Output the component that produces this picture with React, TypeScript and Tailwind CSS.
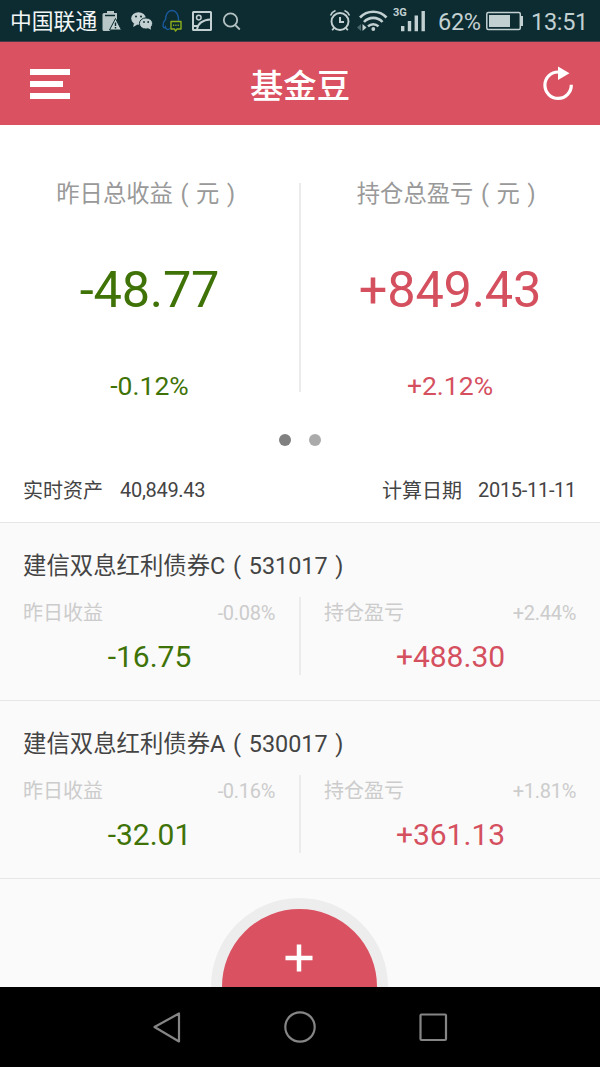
type Tone = "up" | "down";

type Figure = {
  label: string;
  amount: string;
  percent: string;
  tone: Tone;
};

type Fund = {
  name: string;
  code: string;
  figures: Figure[];
};

const toneClass: Record<Tone, string> = {
  up: "text-[#d5505f]",
  down: "text-[#3f7307]",
};

const totals: Figure[] = [
  { label: "昨日总收益", amount: "-48.77", percent: "-0.12%", tone: "down" },
  { label: "持仓总盈亏", amount: "+849.43", percent: "+2.12%", tone: "up" },
];

const funds: Fund[] = [
  {
    name: "建信双息红利债券C",
    code: "531017",
    figures: [
      { label: "昨日收益", amount: "-16.75", percent: "-0.08%", tone: "down" },
      { label: "持仓盈亏", amount: "+488.30", percent: "+2.44%", tone: "up" },
    ],
  },
  {
    name: "建信双息红利债券A",
    code: "530017",
    figures: [
      { label: "昨日收益", amount: "-32.01", percent: "-0.16%", tone: "down" },
      { label: "持仓盈亏", amount: "+361.13", percent: "+1.81%", tone: "up" },
    ],
  },
];

// Brackets take a full character cell each, with the glyph in the middle
function Bracketed({ children }: { children: string }) {
  return (
    <>
      <span className="inline-block w-[1em] text-center">(</span>
      {children}
      <span className="inline-block w-[1em] text-center">)</span>
    </>
  );
}

function StatusBar() {
  return (
    <div className="flex h-[42px] shrink-0 items-center justify-between border-b border-[#4a3a48] bg-[#0c2c31] pl-2.5 pr-3 text-[#c3d0d1]">
      <div className="flex items-center">
        <span className="w-[92px] whitespace-nowrap pt-1 text-[21.8px] text-[#f2f6f6]">中国联通</span>
        <svg className="h-[42px] w-[140px]" viewBox="102 0 140 42" fill="none">
          {/* battery with warning */}
          <path
            d="M107 11h7v2h3v8l-7 10h-6a1.500 1.500 0 0 1-1.500-1.500V14.500A1.500 1.500 0 0 1 104 13h3z"
            fill="#b9c6c7"
          />
          <path d="M105 15.500h10" stroke="#0c2c31" strokeWidth="1.500" />
          <path d="M115.500 18.500l6 11.500h-12z" fill="#c3d0d1" stroke="#0c2c31" strokeWidth="1" />
          <path d="M115.500 22.500v3.500M115.500 27v1.500" stroke="#0c2c31" strokeWidth="1.500" />
          {/* chat bubbles */}
          <ellipse cx="138.500" cy="18.500" rx="7.300" ry="6.200" fill="#c3d0d1" />
          <path d="M134 23l-.8 4 4.300-2.500z" fill="#c3d0d1" />
          <ellipse cx="146" cy="23.500" rx="6.600" ry="5.600" fill="#c3d0d1" stroke="#0c2c31" strokeWidth="1" />
          <path d="M148 28l3 1.800-.5-3.600z" fill="#c3d0d1" />
          <g fill="#0c2c31">
            <circle cx="136" cy="16.500" r="1" />
            <circle cx="141" cy="16.500" r="1" />
            <circle cx="144" cy="22" r=".9" />
            <circle cx="148.200" cy="22" r=".9" />
          </g>
          {/* penguin */}
          <path
            d="M170 28.500c-2 1.500-4 1.500-4.500-1.500-1 1.500-2.500.5-2.500-1.500s1-4.500 2.500-6c0-5 2.500-9 6.500-9s6.500 4 6.500 9v1.500"
            stroke="#1b5a9e"
            strokeWidth="1.400"
          />
          <path
            d="M171 21.500h10v7.500h-4l-1.500 2-1-2h-3.500z"
            stroke="#8fae1b"
            strokeWidth="1.400"
            strokeLinejoin="round"
          />
          <path d="M173 25.300h6" stroke="#8fae1b" strokeWidth="1.400" strokeDasharray="1.200 1.100" />
          {/* picture */}
          <rect x="193" y="12" width="18" height="18" rx=".5" stroke="#c3d0d1" strokeWidth="2" />
          <circle cx="198.800" cy="17.600" r="2.300" stroke="#c3d0d1" strokeWidth="1.500" />
          <path d="M194 26h3.500M197 29.500c.8-5.500 5.500-9.500 13.500-10" stroke="#c3d0d1" strokeWidth="1.800" />
          {/* search */}
          <circle cx="230.500" cy="20" r="6.700" stroke="#b3c1c3" strokeWidth="1.800" />
          <path d="M235.200 25l4.600 4.500" stroke="#b3c1c3" strokeWidth="1.800" />
        </svg>
      </div>
      <div className="flex items-center font-[Roboto] text-[23.500px]">
        <svg className="h-[42px] w-[101px]" viewBox="328 0 101 42" fill="none" stroke="#c3d0d1">
          {/* alarm */}
          <circle cx="340" cy="21.500" r="8.500" strokeWidth="1.900" />
          <path d="M340 17v5h4" strokeWidth="2" />
          <path d="M330.500 15.500c1-2.500 2.500-4 5-5M349.500 15.500c-1-2.500-2.500-4-5-5" strokeWidth="1.600" />
          <path d="M334 28l-1.800 2.200M346 28l1.800 2.200" strokeWidth="1.800" />
          {/* wifi */}
          <path d="M360 17.500a18 18 0 0 1 26.500 0" strokeWidth="2.600" />
          <path d="M364 22a12.500 12.500 0 0 1 18.500 0" strokeWidth="2.600" />
          <path d="M368 26.300a7.500 7.500 0 0 1 10.500 0" strokeWidth="2.500" />
          <circle cx="373.300" cy="29" r="1.900" fill="#c3d0d1" stroke="none" />
          <path d="M361 24v7l-4-3.500z" fill="#49666a" stroke="none" />
          <path d="M362.500 24v7l4-3.500z" fill="#c3d0d1" stroke="none" />
          {/* signal */}
          <text x="393" y="16" fill="#c3d0d1" stroke="none" className="text-[11px] font-bold">
            3G
          </text>
          <path d="M402.700 26v5.300M409.500 21v10.300M416.300 15.500v15.800M423.200 11v20.300" strokeWidth="3.400" />
        </svg>
        <span className="ml-[9px] w-12 whitespace-nowrap pt-1 tracking-[-0.3px]">62%</span>
        <svg className="h-[42px] w-[39px]" viewBox="486 0 39 42" fill="none">
          <rect x="486.800" y="12.500" width="33.500" height="17" rx="1.500" stroke="#c3d0d1" strokeWidth="1.500" />
          <path d="M489 15h21v12h-21z" fill="#c3d0d1" />
          <path d="M521 16h2v10h-2z" fill="#c3d0d1" />
        </svg>
        <span className="w-[63px] whitespace-nowrap pt-1 text-right tracking-[-0.3px]">13:51</span>
      </div>
    </div>
  );
}

function Header() {
  return (
    <header className="flex h-[83px] shrink-0 items-center justify-between bg-[#da5161] pl-[30px] pr-[26px] text-white">
      <button className="flex w-10 flex-col gap-[6px]" aria-label="menu">
        <span className="h-[6px] w-10 bg-white" />
        <span className="h-[6px] w-[33px] bg-white" />
        <span className="h-[6px] w-10 bg-white" />
      </button>
      <h1 className="ml-[-12px] pt-[7px] text-[33.400px] font-medium">基金豆</h1>
      <button aria-label="refresh">
        <svg className="h-10 w-8" viewBox="0 0 32 40" fill="none">
          <path d="M29.300 20.800A13.200 13.200 0 1 1 16.500 8" stroke="#fff" strokeWidth="3.200" />
          <path d="M16 2.500l11.500 6.800L16 16z" fill="#fff" />
        </svg>
      </button>
    </header>
  );
}

function Summary() {
  return (
    <section className="flex h-[397px] shrink-0 flex-col bg-white pt-[58px]">
      <div className="grid h-[209px] grid-cols-2 grid-rows-[209px]">
        {totals.map((item) => (
          <div
            key={item.label}
            className="flex flex-col items-center border-[#ebebeb] first:border-r last:border-l last:pr-px"
          >
            <p className="mt-[-5px] h-8 text-[23.300px] leading-8 text-[#999]">
              {item.label}
              <Bracketed>元</Bracketed>
            </p>
            <p
              className={`mt-[50px] h-[60px] text-[50.500px] leading-[60px] tracking-[-0.2px] ${toneClass[item.tone]}`}
            >
              {item.amount}
            </p>
            <p className={`mt-[50px] h-8 text-[26.500px] leading-8 ${toneClass[item.tone]}`}>{item.percent}</p>
          </div>
        ))}
      </div>
      <div className="mt-[42px] flex justify-center gap-[18px]">
        <span className="size-3 rounded-full bg-[#808080]" />
        <span className="size-3 rounded-full bg-[#aaa]" />
      </div>
      <div className="mt-[28px] flex h-8 items-center justify-between px-6 text-[20px] text-[#444]">
        <p className="flex gap-[17px]">
          <span className="ml-[-1px] pt-px">实时资产</span>
          <span className="tracking-[-0.3px]">40,849.43</span>
        </p>
        <p className="flex gap-4">
          <span className="pt-px">计算日期</span>
          <span className="tracking-[-0.3px]">2015-11-11</span>
        </p>
      </div>
    </section>
  );
}

function FundRow({ fund }: { fund: Fund }) {
  return (
    <li className="h-[178px] border-t border-[#e6e6e6] pt-[27px]">
      <h2 className="h-8 whitespace-nowrap pl-[23px] text-[23.400px] leading-8 text-[#444]">
        {fund.name}
        <Bracketed>{fund.code}</Bracketed>
      </h2>
      <div className="mt-[15px] grid h-[78px] grid-cols-2 grid-rows-[78px]">
        {fund.figures.map((item) => (
          <div key={item.label} className="border-[#ebebeb] pl-[23px] pr-6 first:border-r last:border-l">
            <div className="flex h-[30px] items-center justify-between text-[20px] text-[#ccc]">
              <span className="pt-0.5">{item.label}</span>
              <span className="pt-px tracking-[-0.3px]">{item.percent}</span>
            </div>
            <p className={`mt-[10px] h-10 pl-px text-center text-[30px] leading-10 ${toneClass[item.tone]}`}>
              {item.amount}
            </p>
          </div>
        ))}
      </div>
    </li>
  );
}

function NavBar() {
  return (
    <nav className="h-20 shrink-0 bg-black">
      <svg className="h-20 w-[600px]" viewBox="0 0 600 80" fill="none" stroke="#858585" strokeWidth="2.200">
        <path d="M179 26.500v28L154.500 40z" strokeLinejoin="round" />
        <circle cx="300" cy="40" r="14.700" />
        <rect x="420.500" y="27.500" width="25.500" height="25.500" rx="1" />
      </svg>
    </nav>
  );
}

export default function App() {
  return (
    <div className="flex h-[1067px] w-[600px] flex-col overflow-hidden bg-[#fafafa] font-[Roboto,'Noto_Sans_CJK_SC',sans-serif]">
      <StatusBar />
      <Header />
      <Summary />
      <ul>
        {funds.map((fund) => (
          <FundRow key={fund.code} fund={fund} />
        ))}
      </ul>
      <div className="flex min-h-0 flex-1 justify-center overflow-hidden border-t border-[#e6e6e6] pr-0.5 pt-[19px]">
        <button
          aria-label="add"
          className="flex size-[177px] shrink-0 justify-center rounded-full border-[11px] border-[#ededed] bg-[#da5161] pt-[35px]"
        >
          <svg className="h-7 w-7" viewBox="0 0 28 28" fill="none">
            <path d="M14 .5v27M.5 14h27" stroke="#fff" strokeWidth="4.500" />
          </svg>
        </button>
      </div>
      <NavBar />
    </div>
  );
}
